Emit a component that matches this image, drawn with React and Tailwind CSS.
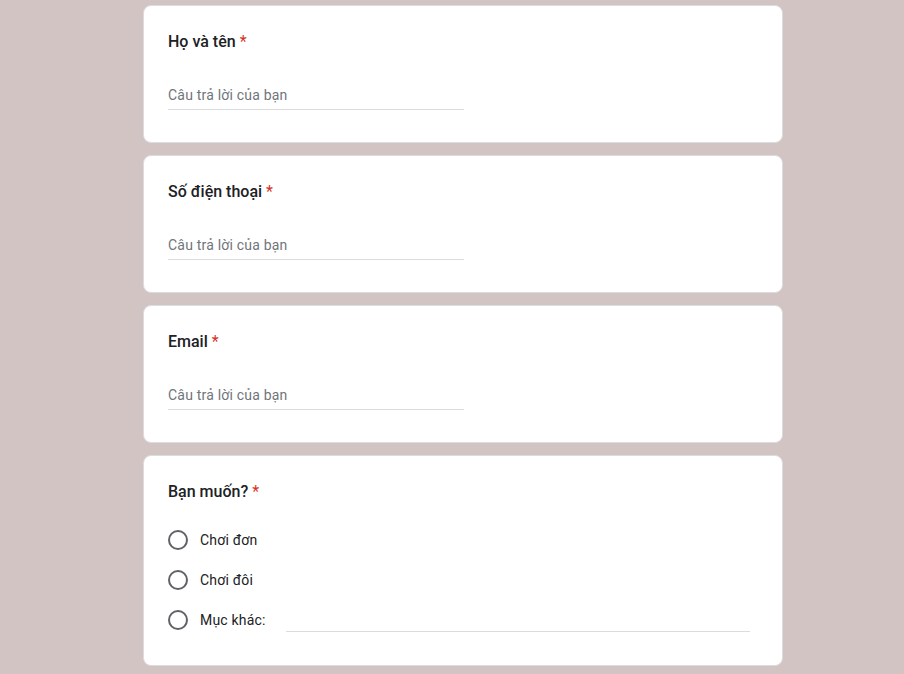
export default function App() {
  const textQuestions = ['Họ và tên', 'Số điện thoại', 'Email']
  const options = ['Chơi đơn', 'Chơi đôi']

  return (
    <div className="min-h-[674px] bg-[#d3c4c4] pl-[143px] pt-[5px] pb-[8px] font-['Roboto',sans-serif]">
      <div className="flex w-[640px] flex-col gap-[12px]">
        {textQuestions.map((q) => (
          <div key={q} className="rounded-[8px] border border-[#dadce0] bg-white px-[24px] pt-[24px] pb-[32px]">
            <div className="text-[16px] leading-[24px] font-medium text-[#202124]">
              {q} <span className="font-normal text-[#d93025]">*</span>
            </div>
            <div className="mt-[26px] flex h-[30px] w-[296px] items-center border-b border-[#dadce0] pt-[1px] text-[14px] tracking-[0.2px] text-[#70757a]">
              Câu trả lời của bạn
            </div>
          </div>
        ))}

        <div className="rounded-[8px] border border-[#dadce0] bg-white px-[24px] pt-[24px] pb-[25px]">
          <div className="text-[16px] leading-[24px] font-medium text-[#202124]">
            Bạn muốn? <span className="font-normal text-[#d93025]">*</span>
          </div>
          <div className="mt-[16px] flex flex-col">
            {options.map((o) => (
              <div key={o} className="flex h-[40px] items-center gap-[12px]">
                <span className="h-[20px] w-[20px] rounded-full border-2 border-[#5f6368]" />
                <span className="text-[14px] tracking-[0.2px] text-[#202124]">{o}</span>
              </div>
            ))}
            <div className="flex h-[40px] items-center">
              <span className="h-[20px] w-[20px] rounded-full border-2 border-[#5f6368]" />
              <span className="ml-[12px] text-[14px] tracking-[0.2px] text-[#202124]">Mục khác:</span>
              <div className="mt-[22px] mr-[8px] ml-[20px] flex-1 border-b border-[#dadce0]" />
            </div>
          </div>
        </div>
      </div>
    </div>
  )
}
